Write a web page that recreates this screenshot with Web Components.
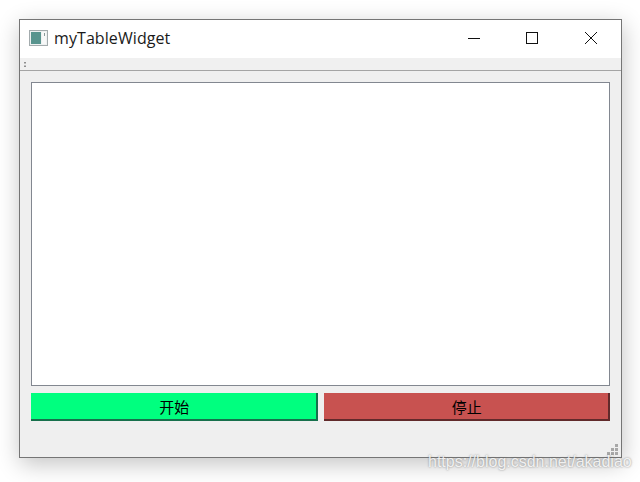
<!DOCTYPE html>
<html>
<head>
<meta charset="utf-8">
<style>
html, body { margin: 0; height: 100%; background: #fff; overflow: hidden; }
body { font-family: "Noto Sans CJK SC", "Liberation Sans", sans-serif; }
</style>
</head>
<body>
<qt-window caption="myTableWidget">
    <qt-table></qt-table>
    <qt-button slot="buttons" color="#00ff7f" edge="#17704c">开始</qt-button>
    <qt-button slot="buttons" color="#c85250" edge="#612a2b">停止</qt-button>
</qt-window>
<water-mark>https://blog.csdn.net/akadiao</water-mark>
<script>
class QtWindow extends HTMLElement {
    constructor() {
        super();
        this.attachShadow({ mode: 'open' });
    }
    connectedCallback() {
        const caption = this.getAttribute('caption');
        this.shadowRoot.innerHTML = `
            <style>
                :host {
                    display: flex;
                    flex-direction: column;
                    box-sizing: border-box;
                    width: 603px;
                    height: 439px;
                    margin: 19px 0 0 19px;
                    background: #efefef;
                    border: 1px solid #757575;
                    box-shadow: 1px 6px 22px rgba(0, 0, 0, 0.24);
                }
                .title {
                    display: flex;
                    align-items: center;
                    height: 38px;
                    background: #fff;
                    padding-left: 9px;
                    flex: none;
                }
                .title svg.app { flex: none; margin-right: 6px; margin-bottom: 2px; }
                .title span {
                    flex: 1;
                    font: 16px "Open Sans", "Noto Sans", sans-serif;
                    letter-spacing: 0.08px;
                    color: #1a1a1a;
                    padding-bottom: 2px;
                }
                .ctl { display: flex; padding-right: 1px; }
                .ctl div {
                    width: 58.5px;
                    height: 38px;
                    display: flex;
                    align-items: center;
                    justify-content: center;
                    padding-bottom: 2px;
                    box-sizing: border-box;
                }
                .strip {
                    flex: none;
                    height: 12px;
                    background: #f0f0f0;
                    border-bottom: 1px solid #a4a4a4;
                    display: flex;
                    align-items: center;
                    padding-left: 4px;
                }
                .body {
                    flex: 1;
                    display: flex;
                    flex-direction: column;
                    padding: 11px 11px 36px 11px;
                    gap: 7px;
                    position: relative;
                }
                .body ::slotted(qt-table) { flex: 1; }
                .row { display: flex; gap: 6px; flex: none; }
                .grip { position: absolute; right: 2px; bottom: 1px; }
            </style>
            <div class="title">
                <svg class="app" width="19" height="16" viewBox="0 0 19 16">
                    <rect x="0.5" y="0.5" width="18" height="15" fill="#eef1f1" stroke="#a3abad"/>
                    <rect x="2" y="2" width="10" height="12" fill="#58948e"/>
                    <rect x="13" y="2" width="4" height="12" fill="#f7f8f8"/>
                    <rect x="15" y="3" width="1" height="3" fill="#8a9898"/>
                </svg>
                <span>${caption}</span>
                <div class="ctl">
                    <div><svg width="14" height="14" viewBox="0 0 14 14"><path d="M1 7.5H13" stroke="#111" fill="none"/></svg></div>
                    <div><svg width="14" height="14" viewBox="0 0 14 14"><rect x="1.5" y="1.5" width="11" height="11" stroke="#111" fill="none"/></svg></div>
                    <div><svg width="14" height="14" viewBox="0 0 14 14"><path d="M1 1L13 13M13 1L1 13" stroke="#111" fill="none"/></svg></div>
                </div>
            </div>
            <div class="strip">
                <svg width="3" height="7" viewBox="0 0 3 7" fill="#8f8f8f"><rect x="0" y="1" width="2" height="1.5"/><rect x="0" y="4.5" width="2" height="1.5"/></svg>
            </div>
            <div class="body">
                <slot></slot>
                <div class="row"><slot name="buttons"></slot></div>
                <svg class="grip" width="12" height="12" viewBox="0 0 12 12" fill="#a8a8a8">
                    <rect x="8" y="0" width="3" height="3"/>
                    <rect x="4" y="4" width="3" height="3"/><rect x="8" y="4" width="3" height="3"/>
                    <rect x="0" y="8" width="3" height="3"/><rect x="4" y="8" width="3" height="3"/><rect x="8" y="8" width="3" height="3"/>
                </svg>
            </div>
        `;
    }
}
customElements.define('qt-window', QtWindow);

class QtTable extends HTMLElement {
    constructor() {
        super();
        this.attachShadow({ mode: 'open' });
        this.shadowRoot.innerHTML = `
            <style>
                :host {
                    display: block;
                    box-sizing: border-box;
                    background: #fff;
                    border: 1px solid #828790;
                }
            </style>
        `;
    }
}
customElements.define('qt-table', QtTable);

class QtButton extends HTMLElement {
    constructor() {
        super();
        this.attachShadow({ mode: 'open' });
    }
    connectedCallback() {
        const color = this.getAttribute('color');
        const edge = this.getAttribute('edge');
        this.shadowRoot.innerHTML = `
            <style>
                :host {
                    display: flex;
                    flex: 1;
                    box-sizing: border-box;
                    height: 28px;
                    align-items: center;
                    justify-content: center;
                    padding-left: 2px;
                    background: ${color};
                    border-right: 2px solid ${edge};
                    border-bottom: 2px solid ${edge};
                    font-size: 15px;
                    color: #000;
                }
            </style>
            <slot></slot>
        `;
    }
}
customElements.define('qt-button', QtButton);

// csdn watermark sits over the window corner
class WaterMark extends HTMLElement {
    constructor() {
        super();
        this.attachShadow({ mode: 'open' });
        this.shadowRoot.innerHTML = `
            <style>
                :host {
                    position: absolute;
                    left: 428px;
                    top: 453px;
                    font: 16px "Liberation Sans", sans-serif;
                    color: rgba(255, 255, 255, 0.85);
                    text-shadow: 0 0 2px rgba(90, 90, 90, 0.75);
                    white-space: nowrap;
                }
            </style>
            <slot></slot>
        `;
    }
}
customElements.define('water-mark', WaterMark);
</script>
</body>
</html>
